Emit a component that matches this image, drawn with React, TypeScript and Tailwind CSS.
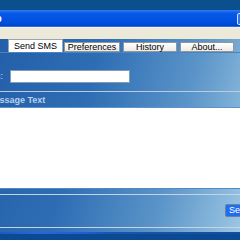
import React from "react";

const tabBase =
  "flex items-center justify-center text-[9px] leading-none text-black border";

export default function App() {
  return (
    <div
      className="w-[240px] h-[240px] overflow-hidden flex flex-col bg-[#0d4f8b]"
      style={{ fontFamily: '"Liberation Sans", Arial, sans-serif' }}
    >
      {/* desktop strip */}
      <div className="h-[10px] bg-[#0c4f8d]" />
      {/* title bar */}
      <div className="h-[17px] flex items-center bg-[linear-gradient(180deg,#2f7cf5_0%,#0758e8_20%,#0151e0_70%,#0047cc_92%,#3c86f0_100%)] relative">
        <span className="text-white text-[11px] font-bold leading-none ml-[-5px]">
          p
        </span>
        <div className="ml-auto mr-[-8px] w-[11px] h-[12px] rounded-[2px] border border-[#d8e4fa] bg-[#2e74f4]" />
      </div>
      {/* beige menu area */}
      <div className="h-[12px] bg-[#ece9d8] border-t border-[#f6f4ea]" />
      {/* main blue panel */}
      <div className="flex-1 flex flex-col bg-[linear-gradient(105deg,#2460aa_0%,#2e6db4_35%,#5a94c8_70%,#9cc6e4_100%)]">
        {/* tabs */}
        <div className="h-[13px] flex items-start pl-[8px] gap-[1px]">
          <div
            className={`${tabBase} w-[55px] h-[13px] bg-white border-[#9aa6b4] border-b-0`}
          >
            Send SMS
          </div>
          <div
            className={`${tabBase} mt-[3px] w-[56px] h-[10px] bg-[linear-gradient(180deg,#ffffff,#ecebe6)] border-[#8e96a0]`}
          >
            Preferences
          </div>
          <div
            className={`${tabBase} mt-[3px] ml-[2px] w-[54px] h-[10px] bg-[linear-gradient(180deg,#ffffff,#ecebe6)] border-[#8e96a0]`}
          >
            History
          </div>
          <div
            className={`${tabBase} mt-[3px] ml-[2px] w-[54px] h-[10px] bg-[linear-gradient(180deg,#ffffff,#ecebe6)] border-[#8e96a0]`}
          >
            About...
          </div>
        </div>
        {/* recipient row */}
        <div className="h-[18px] border-t border-[#4a84c0]" />
        <div className="h-[13px] flex items-center">
          <span className="w-[10px] text-[9px] leading-none text-[#c6dbf0] ml-[-4px]">
            c:
          </span>
          <div className="ml-[4px] w-[120px] h-[13px] bg-white border border-[#7f9db9]" />
        </div>
        <div className="h-[8px]" />
        <div className="h-[1px] bg-[#b9cde0]" />
        <div className="h-[2px]" />
        <div className="h-[13px] flex items-center">
          <span className="text-[9px] font-bold leading-none text-[#b8d2ee] ml-[-13px] whitespace-nowrap">
            Message Text
          </span>
        </div>
        <div className="h-[1px] bg-[#5b94cc]" />
        {/* textarea */}
        <div className="h-[80px] bg-white" />
        <div className="h-[6px] border-t border-[#4f8ac4]" />
        <div className="h-[1px] bg-[#c4d4e2]" />
        <div className="h-[9px]" />
        <div className="h-[13px] flex justify-end">
          <div className="w-[18px] h-[13px] mr-[-3px] rounded-[2px] border border-[#6e8294] bg-[#1f6cf6] flex items-center pl-[3px] text-[9px] text-white leading-none">
            Se
          </div>
        </div>
        <div className="h-[10px]" />
        <div className="h-[1px] bg-[#c4d4e2]" />
        <div className="h-[3px]" />
      </div>
      {/* bottom taskbar */}
      <div className="h-[8px] bg-[#0b4a92] relative">
        <div className="h-[2px] bg-[linear-gradient(90deg,#1a5cb8_0%,#2a64e0_15%,#1f5ed8_35%,#1a56b0_45%,#134e9c_100%)]" />
      </div>
    </div>
  );
}
